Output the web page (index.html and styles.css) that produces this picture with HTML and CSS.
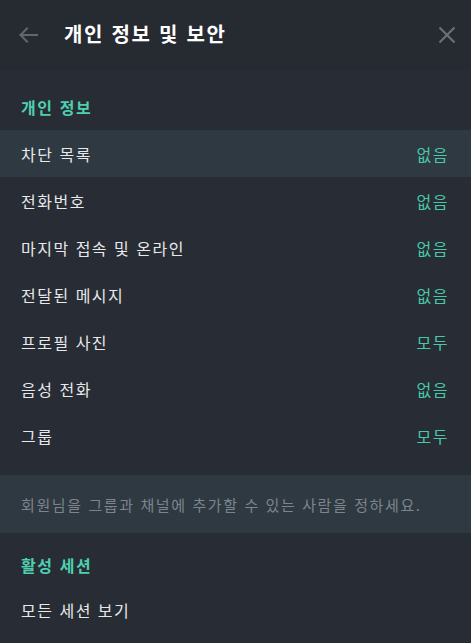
FILE: index.html
```html
<!DOCTYPE html>
<html lang="ko">
<head>
<meta charset="utf-8">
<link rel="stylesheet" href="styles.css">
</head>
<body>
<div class="panel">
  <header class="header">
    <svg class="icon back" width="24" height="24" viewBox="0 0 24 24"><path d="M21 12H4.5M11 5.5L4.5 12l6.5 6.5" fill="none" stroke="#62676e" stroke-width="2" stroke-linecap="square"/></svg>
    <h1 class="title">개인 정보 및 보안</h1>
    <svg class="icon close" width="20" height="20" viewBox="0 0 20 20"><path d="M2.5 2.5l15 15M17.5 2.5l-15 15" fill="none" stroke="#6b7077" stroke-width="2.2"/></svg>
  </header>
  <section class="section">
    <h2 class="section-title">개인 정보</h2>
    <div class="row active"><span>차단 목록</span><span class="val">없음</span></div>
    <div class="row"><span>전화번호</span><span class="val">없음</span></div>
    <div class="row"><span>마지막 접속 및 온라인</span><span class="val">없음</span></div>
    <div class="row"><span>전달된 메시지</span><span class="val">없음</span></div>
    <div class="row"><span>프로필 사진</span><span class="val">모두</span></div>
    <div class="row"><span>음성 전화</span><span class="val">없음</span></div>
    <div class="row"><span>그룹</span><span class="val">모두</span></div>
  </section>
  <div class="note">회원님을 그룹과 채널에 추가할 수 있는 사람을 정하세요.</div>
  <section class="section section-sessions">
    <h2 class="section-title">활성 세션</h2>
    <div class="row"><span>모든 세션 보기</span></div>
  </section>
</div>
</body>
</html>
```

FILE: styles.css
```css
html, body { margin: 0; padding: 0; }
body {
  background: #282c34;
  font-family: "Noto Sans CJK KR", "Noto Sans", sans-serif;
  color: #e6e8ea;
  width: 471px;
  height: 643px;
  overflow: hidden;
}
.header {
  height: 70px;
  background: #262a31;
  display: flex;
  align-items: center;
  padding: 0 14px 0 16px;
  box-sizing: border-box;
}
.back { margin-right: 24px; }
.title {
  flex: 1;
  margin: 0;
  padding-bottom: 4px;
  font-size: 20px;
  font-weight: 700;
  letter-spacing: 1.7px;
  color: #ffffff;
}
.section { padding-top: 14px; }
.section-sessions { padding-top: 7px; }
.section-title {
  margin: 0;
  height: 46px;
  display: flex;
  align-items: center;
  padding: 0 21px;
  font-size: 16px;
  font-weight: 700;
  letter-spacing: 1.6px;
  color: #4ecfb0;
}
.section-sessions .section-title { height: 50px; }
.row {
  height: 47px;
  display: flex;
  align-items: center;
  justify-content: space-between;
  padding: 0 22px 0 21px;
  font-size: 16px;
  letter-spacing: 1.5px;
  color: #e6e8ea;
}
.section-sessions .row { height: 40px; }
.row.active { background: #2f3942; }
.val { color: #47c9a8; }
.note {
  margin-top: 16px;
  height: 58px;
  background: #2f3942;
  display: flex;
  align-items: center;
  padding: 0 21px;
  font-size: 15px;
  letter-spacing: 1.6px;
  color: #7d848c;
}
```
